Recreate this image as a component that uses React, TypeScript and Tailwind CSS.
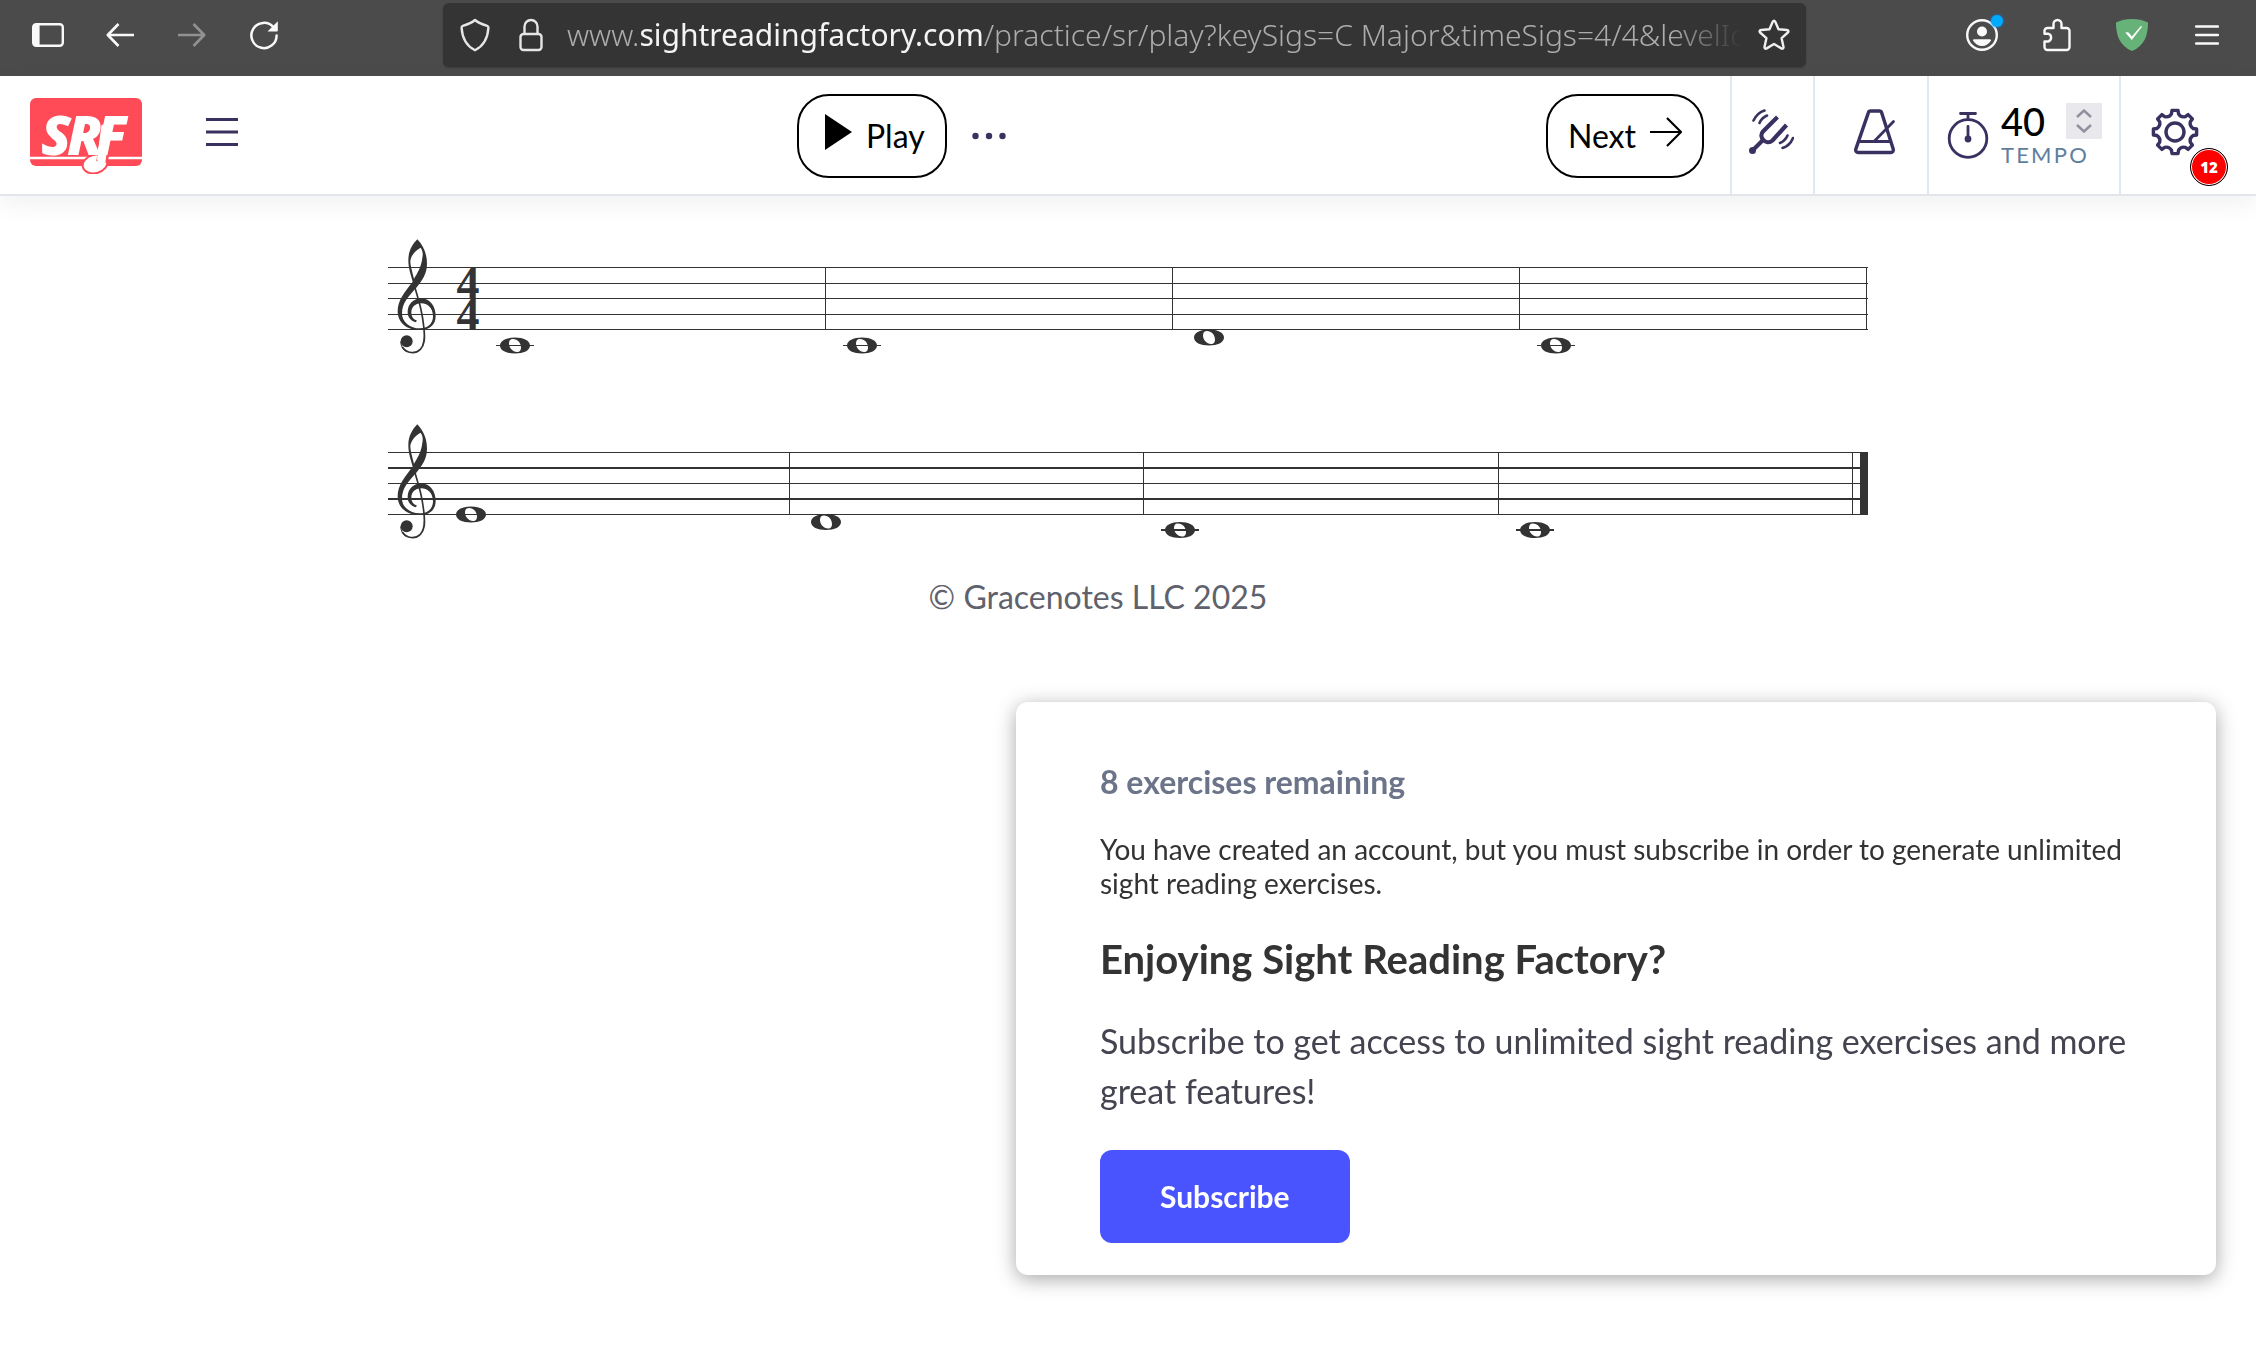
import type { ReactNode } from 'react';

type IconProps = { className?: string };

const INK = '#333333';

function ToolbarButton({ label, children, className = '' }: { label: string; children: ReactNode; className?: string }) {
  return (
    <button aria-label={label} className={`flex h-16 items-center justify-center ${className}`}>
      {children}
    </button>
  );
}

function BrowserBar() {
  return (
    <div className="flex h-[76px] items-start bg-[#4b4b4b] pt-[3px] pr-3 pl-3 text-white">
      <div className="flex">
        <ToolbarButton label="Sidebar" className="w-18">
          <svg width="32" height="24" viewBox="0 0 32 24">
            <rect x="1.2" y="1.2" width="29.6" height="21.6" rx="3" fill="none" stroke="#f9f9fa" strokeWidth="2.4" />
            <path d="M3 1h4.6v22H3a2 2 0 0 1-2-2V3a2 2 0 0 1 2-2z" fill="#f9f9fa" />
          </svg>
        </ToolbarButton>
        <ToolbarButton label="Back" className="w-18">
          <svg width="28" height="24" viewBox="0 0 28 24" fill="none" stroke="#f9f9fa" strokeWidth="2.6">
            <path d="M28 12H2M12.5 1 1.8 12l10.7 11" strokeLinejoin="round" />
          </svg>
        </ToolbarButton>
        <ToolbarButton label="Forward" className="w-18">
          <svg width="28" height="24" viewBox="0 0 28 24" fill="none" stroke="#919191" strokeWidth="2.6">
            <path d="M0 12h26M15.5 1l10.7 11-10.7 11" strokeLinejoin="round" />
          </svg>
        </ToolbarButton>
        <ToolbarButton label="Reload" className="w-18">
          <svg width="30" height="30" viewBox="0 0 30 30">
            <path d="M24.5 7.2A12.6 12.6 0 1 0 27.6 15.5" fill="none" stroke="#f9f9fa" strokeWidth="2.5" strokeLinecap="round" />
            <path d="M28.8 1.2v9.3a1 1 0 0 1-1 1h-9.3z" fill="#f9f9fa" />
          </svg>
        </ToolbarButton>
      </div>

      <div className="mr-[138px] ml-[143px] flex h-16 min-w-0 flex-1 items-center rounded-md bg-[#343434] pr-4 pl-4 shadow-[0_1px_2px_rgba(0,0,0,0.25)]">
        <ToolbarButton label="Tracking protection" className="w-8 shrink-0">
          <svg width="30" height="34" viewBox="0 0 30 34" fill="none" stroke="#e6e6e6" strokeWidth="2.4" strokeLinejoin="round">
            <path d="M15 2C11.5 5 7 6.5 2.8 7.8c-1 .3-1.3 1-1.2 2C2.2 20 6.5 28 15 32.3 23.5 28 27.8 20 28.4 9.8c.1-1-.2-1.7-1.2-2C23 6.5 18.5 5 15 2z" />
          </svg>
        </ToolbarButton>
        <ToolbarButton label="Connection secure" className="ml-6 w-8 shrink-0">
          <svg width="24" height="34" viewBox="0 0 24 34" fill="none" stroke="#e6e6e6" strokeWidth="2.4">
            <rect x="1.5" y="16" width="21" height="16" rx="3" />
            <path d="M5.5 16V8.5a6.5 6.5 0 0 1 13 0V16" />
          </svg>
        </ToolbarButton>
        <div
          role="textbox"
          aria-label="Address"
          className="ml-5 min-w-0 flex-1 overflow-hidden mask-r-from-94% mask-r-to-100% font-['Noto_Sans','Open_Sans',sans-serif] text-3xl font-light whitespace-nowrap text-[#acacac]"
        >
          www.<span className="font-normal text-[#f4f4f6]">sightreadingfactory.com</span>
          /practice/sr/play?keySigs=C Major&amp;timeSigs=4/4&amp;levelId
        </div>
        <ToolbarButton label="Bookmark this page" className="ml-4 w-8 shrink-0">
          <svg width="32" height="32" viewBox="0 0 32 32" fill="none" stroke="#f0f0f0" strokeWidth="2.4" strokeLinejoin="round">
            <path d="M16 1.8c.7 0 1 .5 1.3 1l3.2 7.4 8.4.8c1.5.2 2 1.5 1 2.5l-6.3 5.7 1.9 8.7c.2 1.4-1 2.2-2.2 1.5L16 25l-7.3 4.4c-1.2.7-2.4-.1-2.2-1.5l1.9-8.7-6.3-5.7c-1-1-.5-2.3 1-2.5l8.4-.8 3.2-7.4c.3-.5.6-1 1.3-1z" />
          </svg>
        </ToolbarButton>
      </div>

      <div className="flex">
        <ToolbarButton label="Account" className="relative w-[75px]">
          <svg width="32" height="32" viewBox="0 0 32 32">
            <circle cx="16" cy="16" r="14.8" fill="none" stroke="#f9f9fa" strokeWidth="2.4" />
            <circle cx="16" cy="12.5" r="5" fill="#f9f9fa" />
            <path d="M7 21.5c0-.8.6-1.2 1.3-1.2h15.4c.7 0 1.3.4 1.3 1.2-2 3.5-5.2 5.500-9 5.500s-7-2-9-5.500z" fill="#f9f9fa" />
          </svg>
          <span className="absolute top-3 right-4 h-3 w-3 rounded-full bg-[#00aaff] shadow-[0_0_3px_#0a84ff]" />
        </ToolbarButton>
        <ToolbarButton label="Extensions" className="w-[75px]">
          <svg width="28" height="34" viewBox="0 0 28 34" fill="none" stroke="#f9f9fa" strokeWidth="2.4" strokeLinejoin="round">
            <path d="M4.5 10H10.5V6a4 4 0 0 1 8 0v4h5A3 3 0 0 1 26.5 13v16a3 3 0 0 1-3 3h-19a3 3 0 0 1-3-3v-5.500H5a4 4 0 0 0 0-7.800H1.500V13a3 3 0 0 1 3-3z" />
          </svg>
        </ToolbarButton>
        <ToolbarButton label="AdGuard" className="w-[75px]">
          <svg width="34" height="34" viewBox="0 0 34 34">
            <path d="M17 1C11.5 1 6 2 1 4.5 1 18 5 28 17 33 29 28 33 18 33 4.5 28 2 22.5 1 17 1z" fill="#67b279" />
            <path d="M10.5 14.8c1.5-.8 3-.6 4 .8l2.3 2.8 8.700-10c.7-.6 1.500-.3 1.300.5L16.800 22z" fill="#fff" />
          </svg>
        </ToolbarButton>
        <ToolbarButton label="Open application menu" className="w-[75px]">
          <svg width="24" height="20" viewBox="0 0 24 20" stroke="#f9f9fa" strokeWidth="2.4" strokeLinecap="round">
            <path d="M1 1.5h22M1 10h22M1 18.5h22" />
          </svg>
        </ToolbarButton>
      </div>
    </div>
  );
}

function Logo() {
  return (
    <svg width="112" height="76" viewBox="0 0 112 76" role="img" aria-label="Sight Reading Factory">
      <rect width="112" height="68" rx="6" fill="#ff4b57" />
      <path d="M0 60h112" stroke="#fff" strokeWidth="2.6" />
      <ellipse cx="65" cy="66" rx="12.5" ry="9.2" fill="#fff" stroke="#ff4b57" strokeWidth="2" transform="rotate(-14 65 66)" />
      <path d="M77.5 30 72 64" stroke="#ff4b57" strokeWidth="11.5" />
      <g fill="#fff" fontFamily="'Open Sans', sans-serif" fontStyle="italic" fontWeight="800" fontSize="55">
        <text x="11" y="57">S</text>
        <text x="37" y="57">R</text>
        <text x="66" y="57">F</text>
      </g>
      <path d="M81 24 75.5 63.5c-.8 4.5-2 6.5-4.5 8.5l-4-11 4.500-34z" fill="#fff" />
    </svg>
  );
}

function TuningFork({ className }: IconProps) {
  return (
    <svg className={className} viewBox="0 0 46 46" fill="none" stroke="currentColor" strokeLinecap="round">
      <circle cx="4.5" cy="41.5" r="3.5" fill="currentColor" stroke="none" />
      <path d="M5 41 14.5 31.5" strokeWidth="4" />
      <path d="M29.5 8 15 22.5c-5 5.500 3 14.500 9.500 9L38.500 16" strokeWidth="4.2" strokeLinecap="butt" />
      <path d="M5.5 11.5C8 6.5 11.5 3 16.5 1.5M11.5 14c1.5-3.5 4-6 7.500-7.500M45 29c-2 5-5.500 8.500-10.500 10M39.500 26.500c-1.500 3.500-4 6-7.500 7.500" strokeWidth="2.6" />
    </svg>
  );
}

function Metronome({ className }: IconProps) {
  return (
    <svg className={className} viewBox="0 0 42 46" fill="none" stroke="currentColor" strokeWidth="3.4" strokeLinecap="round" strokeLinejoin="round">
      <path d="M16.5 2h9c1 0 1.8.6 2.1 1.6l11.600 36.500c.5 1.900-.6 3.400-2.400 3.400H4.200c-1.800 0-2.900-1.500-2.400-3.400L14.400 3.600c.3-1 1.100-1.600 2.100-1.600z" />
      <path d="M6.5 32.5h29M20.5 32 39.5 12.5" strokeWidth="2.8" />
    </svg>
  );
}

function Stopwatch({ className }: IconProps) {
  return (
    <svg className={className} viewBox="0 0 42 48" fill="none" stroke="currentColor" strokeWidth="2.8" strokeLinecap="round">
      <circle cx="21" cy="27.5" r="18.8" />
      <path d="M13.5 2.5h15M21 2.5v6M21 15.5v12" />
      <circle cx="21" cy="28" r="3.4" fill="currentColor" stroke="none" />
    </svg>
  );
}

// Eight rounded teeth, with scooped valleys between them.
const GEAR_PATH =
  Array.from({ length: 8 }, (_, i) => {
    const at = (deg: number, r: number) => {
      const a = ((i * 45 + deg - 90) * Math.PI) / 180;
      return `${(24 + r * Math.cos(a)).toFixed(2)} ${(24 + r * Math.sin(a)).toFixed(2)}`;
    };
    return `${i === 0 ? 'M' : 'L'}${at(-8, 21.8)}L${at(8, 21.8)}L${at(11, 18.5)}Q${at(22.5, 15.5)} ${at(34, 18.5)}`;
  }).join('') + 'Z';

function Gear({ className }: IconProps) {
  return (
    <svg className={className} viewBox="0 0 48 48" fill="none" stroke="currentColor" strokeWidth="3.4" strokeLinejoin="round">
      <path d={GEAR_PATH} />
      <circle cx="24" cy="24" r="9" />
    </svg>
  );
}

function AppHeader() {
  return (
    <header className="flex h-[120px] items-stretch justify-between border-b-2 border-[#e2e5ea] bg-white pl-[30px] text-[#3a3160] shadow-[0_8px_24px_rgba(0,0,0,0.06)]">
      <div className="flex items-center gap-10 pt-0.5">
        <a href="#home">
          <Logo />
        </a>
        <button aria-label="Menu" className="flex h-20 w-20 items-center justify-center pb-2">
          <svg width="32" height="30" viewBox="0 0 32 30" stroke="currentColor" strokeWidth="3">
            <path d="M0 2.5h32M0 15h32M0 27.5h32" />
          </svg>
        </button>
      </div>

      <div className="flex items-center gap-5 pt-0.5">
        <button className="flex h-[84px] w-[150px] items-center gap-[14px] rounded-4xl border-2 border-black pl-[26px] text-[32px] text-black">
          <svg width="27" height="36" viewBox="0 0 27 36" className="mb-2 shrink-0">
            <path d="M0 0 27 18 0 36z" />
          </svg>
          Play
        </button>
        <button aria-label="More" className="flex h-11 w-11 items-center justify-center">
          <svg width="34" height="8" viewBox="0 0 34 8" fill="currentColor">
            <circle cx="3.5" cy="4" r="3.2" />
            <circle cx="17" cy="4" r="3.2" />
            <circle cx="30.5" cy="4" r="3.2" />
          </svg>
        </button>
      </div>

      <div className="flex items-center">
        <button className="mt-0.5 mr-[26px] flex h-[84px] w-[158px] items-center justify-center gap-[14px] rounded-4xl border-2 border-black text-[32px] text-black">
          Next
          <svg width="32" height="30" viewBox="0 0 32 30" fill="none" stroke="currentColor" strokeWidth="2.2" className="mb-2">
            <path d="M0 15h31M17 1l14 14-14 14" />
          </svg>
        </button>
        <button aria-label="Tuner" className="flex w-[83px] items-center justify-center self-stretch border-l-2 border-[#e2e8f0] pr-1 pb-1.5">
          <TuningFork className="h-[46px] w-[46px]" />
        </button>
        <button aria-label="Metronome" className="flex w-[114px] items-center justify-center self-stretch border-l-2 border-[#e2e8f0] pb-1.5 pl-2">
          <Metronome className="h-[46px] w-[42px]" />
        </button>
        <div className="flex w-[192px] items-center gap-3 self-stretch border-l-2 border-[#e2e8f0] pl-[18px]">
          <Stopwatch className="h-12 w-[42px] shrink-0" />
          <div>
            <div className="flex h-9 items-center">
              <input
                id="tempo"
                type="number"
                defaultValue={40}
                className="h-9 w-[65px] [appearance:textfield] text-[38px] leading-9 font-medium text-black outline-none [&::-webkit-inner-spin-button]:appearance-none"
              />
              <div className="flex h-9 w-9 flex-col items-center justify-between bg-[#e8e8ed] py-1.5">
                <button aria-label="Increase tempo">
                  <svg width="16" height="9" viewBox="0 0 16 9" fill="none" stroke="#8f8f9d" strokeWidth="2.4">
                    <path d="M1 8l7-6.500L15 8" />
                  </svg>
                </button>
                <button aria-label="Decrease tempo">
                  <svg width="16" height="9" viewBox="0 0 16 9" fill="none" stroke="#8f8f9d" strokeWidth="2.4">
                    <path d="M1 1l7 6.500L15 1" />
                  </svg>
                </button>
              </div>
            </div>
            <label htmlFor="tempo" className="mt-1 block text-[22px] leading-6 tracking-widest text-[#5f7f9c]">
              TEMPO
            </label>
          </div>
        </div>
        <button aria-label="Settings" className="relative flex w-[137px] items-center justify-center self-stretch border-l-2 border-[#e2e8f0] pr-7 pb-1.5">
          <Gear className="h-12 w-12" />
          <span className="absolute top-18 right-7 flex h-[38px] w-[38px] items-center justify-center rounded-full border border-black bg-[#fe0000] font-['Open_Sans',sans-serif] text-[15px] font-extrabold text-white ring-1 ring-white ring-inset">
            12
          </span>
        </button>
      </div>
    </header>
  );
}

function TrebleClef({ x, y }: { x: number; y: number }) {
  return (
    <svg x={x} y={y} width="39" height="116" viewBox="82 56 117 348">
      <path
        fillRule="evenodd"
        fill={INK}
        d="M143 57C163 78 172 103 172 130C172 160 158 180 140 202C115 230 97 248 97 280C97 305 122 324 150 324C180 324 190 305 190 288C190 262 172 249 155 249C135 249 125 262 125 277C125 290 132 296 142 301L138 306C120 300 114 288 114 275C114 250 133 234 155 234C182 234 198 260 198 287C198 312 182 329 150 329C112 329 84 308 84 272C84 240 105 215 129 184C124 165 116 145 116 120C116 92 128 72 143 57zM153 82C160 92 160 102 158 112C155 140 142 160 133 175C128 155 122 135 122 122C124 106 135 92 153 82z"
      />
      <path d="M134 196C150 250 158 275 163 325C166 355 165 374 152 387C137 402 111 400 98 380" fill="none" stroke={INK} strokeWidth="5" />
      <path d="M93 364C94 378 100 388 110 394" fill="none" stroke={INK} strokeWidth="3" />
      <circle cx="111" cy="363" r="18" fill={INK} />
    </svg>
  );
}

function WholeNote({ x, y, ledger }: { x: number; y: number; ledger?: number }) {
  return (
    <g fill={INK}>
      <path
        fillRule="evenodd"
        d={`M${x - 15} ${y}c0-5 6.5-8 15-8s15 3 15 8-6.5 8-15 8-15-3-15-8zM${x - 6} ${y - 2}c0 4 3.5 8.5 8 8.5 3 0 4-2 4-4.5 0-4.5-3.5-8.5-8-8.5-3 0-4 2-4 4.5z`}
      />
      {ledger && <rect x={x - 19} y={y - ledger / 2} width="38" height={ledger} shapeRendering="crispEdges" />}
    </g>
  );
}

type StaffProps = {
  label: string;
  lines: [number, number][];
  bars: number[];
  notes: { x: number; y: number; ledger?: number }[];
  timeSig?: boolean;
  final?: boolean;
};

function Staff({ label, lines, bars, notes, timeSig, final }: StaffProps) {
  return (
    <svg viewBox="0 0 1480 125" className="w-full" role="img" aria-label={label}>
      <g fill={INK} shapeRendering="crispEdges">
        {lines.map(([y, h]) => (
          <rect key={y} x="0" y={y} width="1480" height={h} />
        ))}
        {bars.map((x) => (
          <rect key={x} x={x} y="29" width="1" height="63" />
        ))}
        {final && <rect x="1472" y="29" width="8" height="63" />}
      </g>
      <TrebleClef x={9} y={1} />
      {timeSig && (
        <g fill={INK} fontFamily="'Liberation Serif', serif" fontWeight="700" fontSize="46" textAnchor="middle">
          <text x="80" y="61">4</text>
          <text x="80" y="92">4</text>
        </g>
      )}
      {notes.map((n) => (
        <WholeNote key={n.x} {...n} />
      ))}
    </svg>
  );
}

function Score() {
  return (
    <main className="mx-auto w-[1480px] max-w-full pt-[42px]">
      <Staff
        label="Measures 1 to 4"
        lines={[[29, 1], [45, 1], [60, 1], [76, 1], [91, 1]]}
        bars={[437, 784, 1131, 1478]}
        notes={[
          { x: 127, y: 107.5, ledger: 1 },
          { x: 474, y: 107.5, ledger: 1 },
          { x: 821, y: 99.5 },
          { x: 1168, y: 107.5, ledger: 1 },
        ]}
        timeSig
      />
      <div className="mt-15">
        <Staff
          label="Measures 5 to 8"
          lines={[[29, 1], [44, 2], [60, 1], [75, 2], [91, 1]]}
          bars={[401, 755, 1110, 1464]}
          notes={[
            { x: 83, y: 91.5, ledger: 1 },
            { x: 438, y: 99 },
            { x: 792, y: 107, ledger: 2 },
            { x: 1147, y: 107, ledger: 2 },
          ]}
          final
        />
      </div>
      <p className="mt-7 pr-15 text-center text-[32px] leading-[42px] text-[#5f626c]">© Gracenotes LLC 2025</p>
    </main>
  );
}

function SubscribeCard() {
  return (
    <aside className="fixed right-10 bottom-18 w-[1200px] max-w-full rounded-xl bg-white px-[84px] pt-15 pb-8 shadow-[0_4px_20px_rgba(0,0,0,0.35)]">
      <p className="text-[32px] leading-10 font-bold text-[#6b7488]">8 exercises remaining</p>
      <p className="mt-[30px] text-[28px] leading-[34px] text-[#333333]">
        You have created an account, but you must subscribe in order to generate unlimited sight reading exercises.
      </p>
      <h2 className="mt-[34px] text-[40px] leading-[50px] font-bold text-[#333333]">Enjoying Sight Reading Factory?</h2>
      <p className="mt-8 text-[34px] leading-[50px] text-[#43444f]">
        Subscribe to get access to unlimited sight reading exercises and more great features!
      </p>
      <button className="mt-[34px] h-[93px] rounded-xl bg-[#4954ff] px-15 text-[30px] font-bold text-white">Subscribe</button>
    </aside>
  );
}

export default function App() {
  return (
    <div className="min-h-screen bg-white font-['Lato',sans-serif]">
      <BrowserBar />
      <AppHeader />
      <Score />
      <SubscribeCard />
    </div>
  );
}
